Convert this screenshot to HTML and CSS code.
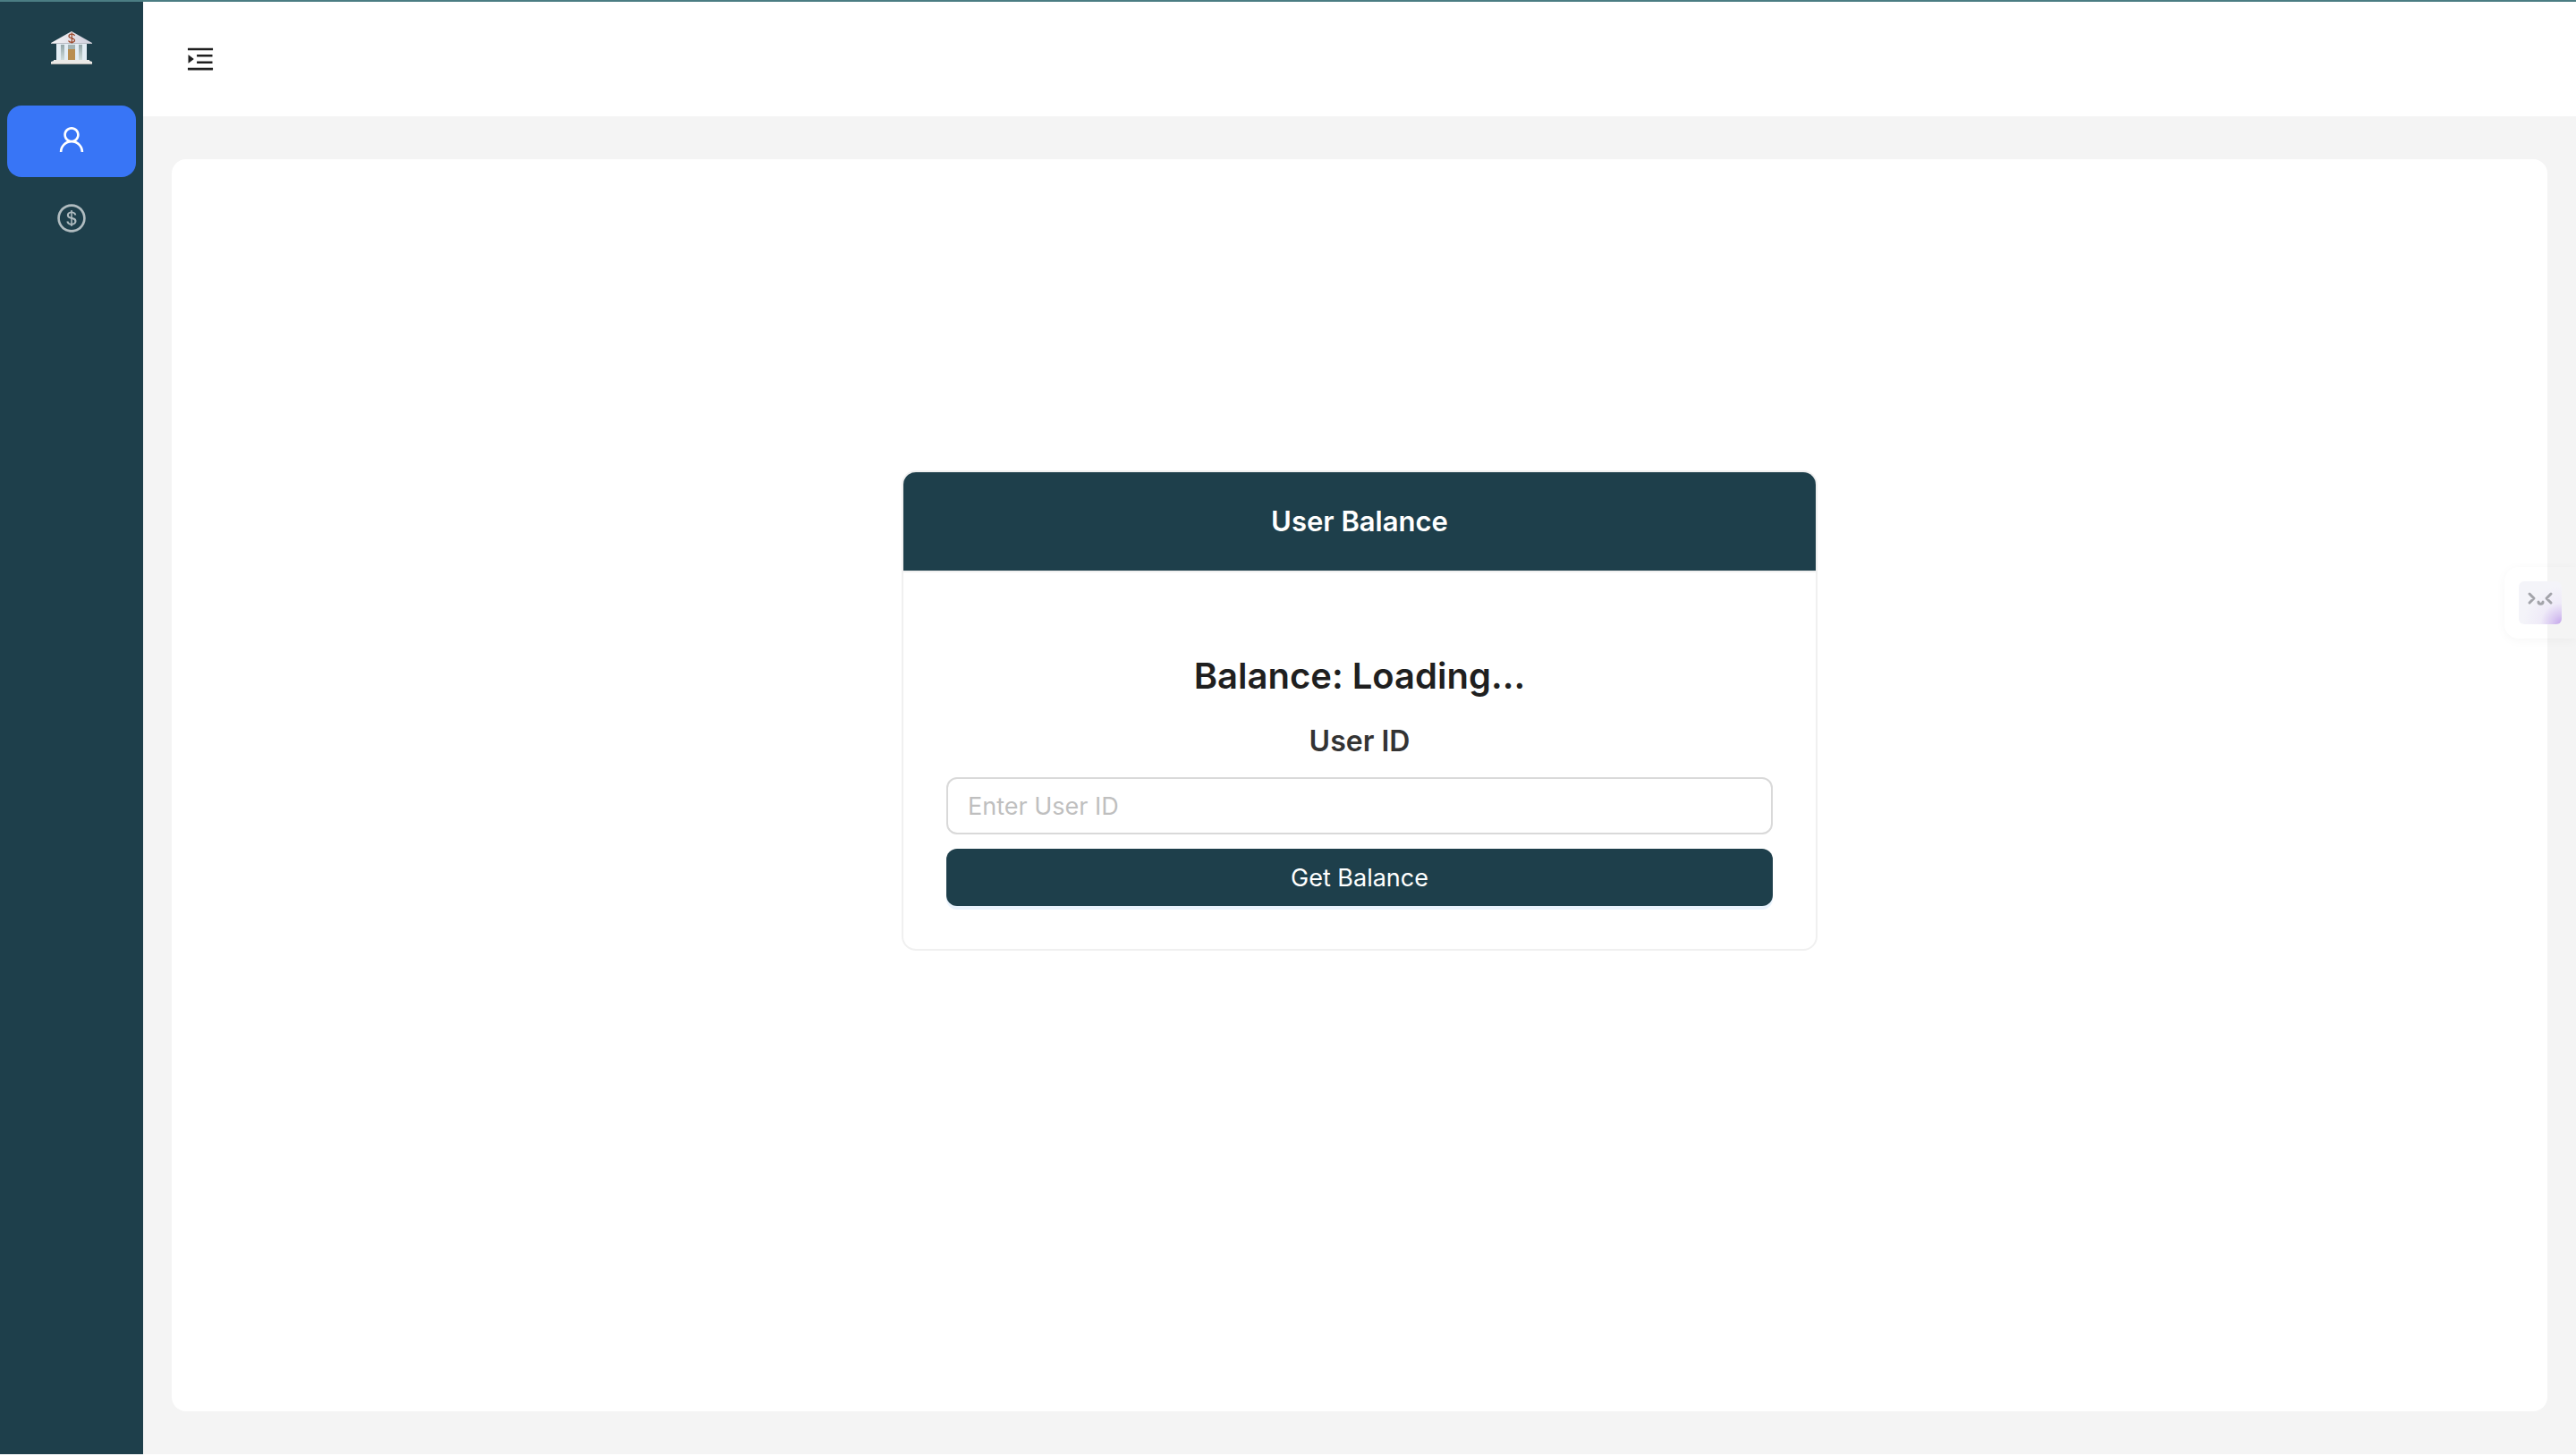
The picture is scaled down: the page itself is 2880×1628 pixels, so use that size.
FILE: index.html
```html
<!DOCTYPE html>
<html lang="en">
<head>
  <meta charset="utf-8">
  <title>User Balance</title>
  <link rel="stylesheet" href="styles.css">
</head>
<body>
  <div class="layout">
    <aside class="sider">
      <a class="logo" href="#" aria-label="Home">
        <svg class="logo-icon" viewBox="0 0 48 40" aria-hidden="true">
          <defs>
            <linearGradient id="roof" x1="0" y1="0" x2="1" y2="0">
              <stop offset="0" stop-color="#f4f3f6"/>
              <stop offset="1" stop-color="#cfcfdc"/>
            </linearGradient>
            <linearGradient id="gap" x1="0" y1="0" x2="0" y2="1">
              <stop offset="0" stop-color="#93a5a8"/>
              <stop offset="1" stop-color="#cfdcda"/>
            </linearGradient>
          </defs>
          <path d="M7 14h34v20H7z" fill="#dfe9ef"/>
          <path d="M12 16h4v17h-4zM32 16h4v17h-4z" fill="url(#gap)"/>
          <path d="M20 16h8v5h-8z" fill="#a3b2b2"/>
          <path d="M20 21h8v13h-8z" fill="#b98e4f"/>
          <path d="M7 15h5v18H7zM16 15h4v18h-4zM28 15h4v18h-4zM36 15h5v18h-5z" fill="#e3edf4"/>
          <path d="M24 1L1 14v1h46v-1z" fill="url(#roof)"/>
          <path d="M1 14h46v1H1z" fill="#b9bcc4"/>
          <path d="M4 33h40v1l3 1v2H1v-2l3-1z" fill="#ebe9e6"/>
          <path d="M1 37h46v1H1z" fill="#b5b3b0"/>
          <path d="M27.500 6c-1-3-6.500-2.500-6.500.5s6.500 1.500 6.500 4.500-6 3-7 .5M24.300 2.500v12" fill="none" stroke="#9a4425" stroke-width="1.200"/>
        </svg>
      </a>
      <nav class="menu">
        <a class="menu-item menu-item-selected" href="#" aria-label="User">
          <svg class="icon" viewBox="0 0 1024 1024" aria-hidden="true"><path d="M858.5 763.6a374 374 0 00-80.6-119.5 375.63 375.63 0 00-119.5-80.6c-.4-.2-.8-.3-1.2-.5C719.5 518 760 444.7 760 362c0-137-111-248-248-248S264 225 264 362c0 82.7 40.5 156 102.8 201.1-.4.2-.8.3-1.2.5-44.8 18.9-85 46-119.5 80.6a375.63 375.63 0 00-80.6 119.5A371.7 371.7 0 00136 901.8a8 8 0 008 8.2h60c4.4 0 7.9-3.5 8-7.8 2-77.2 33-149.5 87.8-204.3 56.7-56.7 132-87.9 212.2-87.9s155.5 31.2 212.2 87.9C779 752.7 810 825 812 902.2c.1 4.4 3.6 7.8 8 7.8h60a8 8 0 008-8.2c-1-47.8-10.9-94.3-29.5-138.2zM512 534c-45.9 0-89.1-17.9-121.6-50.4S340 407.9 340 362c0-45.9 17.9-89.1 50.4-121.6S466.1 190 512 190s89.1 17.9 121.6 50.4S684 316.1 684 362c0 45.9-17.9 89.1-50.4 121.6S557.9 534 512 534z"/></svg>
        </a>
        <a class="menu-item" href="#" aria-label="Balance">
          <svg class="icon" viewBox="0 0 1024 1024" aria-hidden="true"><path d="M512 64C264.6 64 64 264.6 64 512s200.6 448 448 448 448-200.6 448-448S759.4 64 512 64zm0 820c-205.4 0-372-166.6-372-372s166.6-372 372-372 372 166.6 372 372-166.6 372-372 372zm47.7-395.2l-25.4-5.9V348.6c38 5.2 61.5 29 65.5 58.2.5 4 3.9 6.9 7.9 6.9h44.9c4.7 0 8.4-4.1 8-8.8-6.1-62.3-57.4-102.3-125.9-109.2V263c0-4.4-3.6-8-8-8h-28.1c-4.4 0-8 3.6-8 8v33c-70.8 6.9-126.2 46-126.2 119 0 67.6 49.8 100.2 102.1 112.7l24.7 6.3v142.7c-44.2-5.9-69-29.5-74.1-61.3-.6-3.8-4-6.6-7.9-6.6H363c-4.7 0-8.4 4-8 8.7 4.5 55 46.2 105.6 135.2 112.1V761c0 4.4 3.6 8 8 8h28.4c4.4 0 8-3.6 8-8.1l-.2-31.7c78.3-6.9 134.3-48.8 134.3-124-.1-69.4-44.2-100.4-109-116.4zm-68.6-16.2c-5.6-1.6-10.3-3.1-15-5-33.8-12.2-49.5-31.9-49.5-57.3 0-36.3 27.5-57 64.5-61.7v124zM534.3 677V543.3c3.1.9 5.9 1.6 8.8 2.2 47.3 14.4 63.2 34.4 63.2 65.1 0 39.1-29.4 62.6-72 66.4z"/></svg>
        </a>
      </nav>
    </aside>
    <div class="main">
      <header class="header">
        <button class="toggle" type="button" aria-label="Expand menu">
          <svg class="icon" viewBox="0 0 1024 1024" aria-hidden="true"><path d="M408 442h480c4.400 0 8-3.600 8-8v-56c0-4.400-3.600-8-8-8H408c-4.400 0-8 3.600-8 8v56c0 4.400 3.600 8 8 8zm-8 204c0 4.400 3.600 8 8 8h480c4.400 0 8-3.600 8-8v-56c0-4.400-3.600-8-8-8H408c-4.400 0-8 3.600-8 8v56zm504-486H120c-4.400 0-8 3.600-8 8v56c0 4.400 3.600 8 8 8h784c4.400 0 8-3.600 8-8v-56c0-4.400-3.600-8-8-8zm0 632H120c-4.400 0-8 3.600-8 8v56c0 4.400 3.600 8 8 8h784c4.400 0 8-3.600 8-8v-56c0-4.400-3.600-8-8-8zM142.400 642.100L298.700 519a8.840 8.840 0 000-13.900L142.400 381.900c-5.800-4.600-14.400-.5-14.400 6.900v246.300a8.900 8.900 0 0014.400 7z"/></svg>
        </button>
      </header>
      <main class="content">
        <section class="card">
          <h1 class="card-head">User Balance</h1>
          <form class="card-body">
            <h2 class="balance">Balance: Loading...</h2>
            <label class="label" for="user-id">User ID</label>
            <input class="input" id="user-id" type="text" placeholder="Enter User ID">
            <button class="submit" type="button">Get Balance</button>
          </form>
        </section>
      </main>
    </div>
  </div>
  <button class="assistant" type="button" aria-label="Assistant">
    <svg class="assistant-icon" viewBox="0 0 48 48" aria-hidden="true">
      <defs>
        <radialGradient id="face" cx="1" cy="1" r="0.9">
          <stop offset="0" stop-color="#c3a4ea"/>
          <stop offset="0.25" stop-color="#d9c8f1"/>
          <stop offset="0.55" stop-color="#efebf8"/>
          <stop offset="1" stop-color="#f4f4f9"/>
        </radialGradient>
      </defs>
      <rect width="48" height="48" rx="6" fill="url(#face)"/>
      <path d="M12 14l5 5-5 5M36 14l-5 5 5 5M22 23c0 3 5 3 5 0" fill="none" stroke="#a3a4aa" stroke-width="3" stroke-linecap="round" stroke-linejoin="round"/>
    </svg>
  </button>
</body>
</html>
```
FILE: styles.css
```css
* {
  box-sizing: border-box;
}

body {
  margin: 0;
  background: #fff;
  color: #1f1f1f;
  font-family: Inter, "Liberation Sans", sans-serif;
  font-size: 27px;
}

.layout {
  display: flex;
  height: calc(100vh - 2px);
  border-top: 2px solid #4b7d83;
}

.sider {
  flex: none;
  width: 160px;
  background: #1e3f4b;
}

.logo {
  display: flex;
  justify-content: center;
  padding: 32px 0 40px;
}

.logo-icon {
  width: 48px;
  height: 40px;
}

.menu {
  display: grid;
  gap: 8px;
  padding: 4px 8px;
}

.menu-item {
  display: flex;
  align-items: center;
  justify-content: center;
  height: 80px;
  padding-bottom: 4px;
  border-radius: 16px;
  color: rgba(255, 255, 255, 0.65);
}

.menu-item-selected {
  background: #3875f6;
  color: #fff;
}

.icon {
  display: block;
  width: 36px;
  height: 36px;
  fill: currentColor;
}

.main {
  display: flex;
  flex: 1;
  flex-direction: column;
  background: #f4f4f4;
}

.header {
  display: flex;
  align-items: center;
  height: 128px;
  background: #fff;
}

.toggle {
  display: flex;
  align-items: center;
  justify-content: center;
  width: 128px;
  height: 128px;
  padding: 0;
  border: 0;
  background: none;
  color: #1f1f1f;
}

.content {
  display: flex;
  flex: 1;
  align-items: center;
  justify-content: center;
  margin: 48px 32px;
  padding-bottom: 167px;
  border-radius: 16px;
  background: #fff;
}

.card {
  width: 1024px;
  border: 2px solid #f0f0f0;
  border-radius: 16px;
  overflow: hidden;
}

.card-head {
  margin: 0;
  border-bottom: 2px solid #f0f0f0;
  background: #1e3f4b;
  background-clip: padding-box;
  color: #fff;
  font-size: 31px;
  font-weight: 600;
  line-height: 110px;
  text-align: center;
}

.card-body {
  display: flex;
  flex-direction: column;
  padding: 88px 48px 48px;
}

.balance {
  margin: 0 0 17px;
  font-size: 40px;
  font-weight: 600;
  line-height: 56px;
  text-align: center;
}

.label {
  margin-bottom: 12px;
  color: #333;
  font-size: 32px;
  font-weight: 600;
  line-height: 56px;
  text-align: center;
}

.input {
  height: 64px;
  margin-bottom: 16px;
  padding: 0 22px;
  border: 2px solid #d9d9d9;
  border-radius: 12px;
  background: #fff;
  color: #1f1f1f;
  font: inherit;
}

.input::placeholder {
  color: #bfbfbf;
}

.submit {
  height: 64px;
  padding: 0;
  border: 0;
  border-radius: 12px;
  background: #1e3f4b;
  box-shadow: 0 4px 0 #eaf3fd;
  color: #fff;
  font: inherit;
}

.assistant {
  position: absolute;
  top: 634px;
  right: 0;
  width: 80px;
  height: 80px;
  padding: 16px;
  border: 0;
  border-radius: 16px 0 0 16px;
  background: none;
  box-shadow: 0 2px 12px rgba(0, 0, 0, 0.04);
}

.assistant-icon {
  display: block;
  width: 48px;
  height: 48px;
}
```
